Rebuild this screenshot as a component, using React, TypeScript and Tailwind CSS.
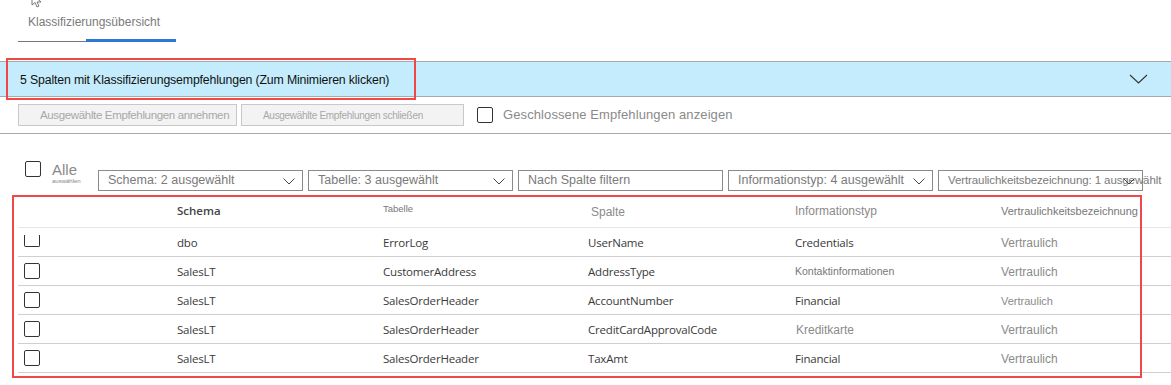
const sans = "font-['Liberation_Sans',Arial,sans-serif]";
const ui = "font-['Open_Sans','Noto_Sans',sans-serif]";

type Cell = {text: string; className: string};

const dark = `${ui} text-[11.5px] tracking-[-0.2px] text-[#3a3a3a]`;

const rows: Cell[][] = [
  [
    {text: "dbo", className: dark},
    {text: "ErrorLog", className: dark},
    {text: "UserName", className: dark},
    {text: "Credentials", className: dark},
    {text: "Vertraulich", className: `${sans} text-[12px] text-[#8a8a8a]`},
  ],
  [
    {text: "SalesLT", className: dark},
    {text: "CustomerAddress", className: dark},
    {text: "AddressType", className: dark},
    {text: "Kontaktinformationen", className: `${sans} text-[10.5px] text-[#777]`},
    {text: "Vertraulich", className: `${sans} text-[12px] text-[#8a8a8a]`},
  ],
  [
    {text: "SalesLT", className: dark},
    {text: "SalesOrderHeader", className: dark},
    {text: "AccountNumber", className: dark},
    {text: "Financial", className: dark},
    {text: "Vertraulich", className: `${sans} text-[11px] text-[#8a8a8a]`},
  ],
  [
    {text: "SalesLT", className: dark},
    {text: "SalesOrderHeader", className: dark},
    {text: "CreditCardApprovalCode", className: dark},
    {text: "Kreditkarte", className: `${sans} pl-px text-[12px] text-[#8a8a8a]`},
    {text: "Vertraulich", className: `${sans} text-[12px] text-[#8a8a8a]`},
  ],
  [
    {text: "SalesLT", className: dark},
    {text: "SalesOrderHeader", className: dark},
    {text: "TaxAmt", className: dark},
    {text: "Financial", className: dark},
    {text: "Vertraulich", className: `${sans} text-[12px] text-[#8a8a8a]`},
  ],
];

const cols = "grid grid-cols-[159px_206px_205px_207px_206px_1fr]";

const Chevron = ({className}: {className: string}) => (
  <svg className={className} width="12" height="7" viewBox="0 0 12 7">
    <path d="M0.5 0.5 L6 6 L11.5 0.5" fill="none" stroke="#444" strokeWidth="1" />
  </svg>
);

const Dropdown = ({
  label,
  textSize = "text-[12.5px]",
  chevron = true,
}: {
  label: string;
  textSize?: string;
  chevron?: boolean;
}) => (
  <div className="relative flex h-[21px] w-[205px] shrink-0 items-center border border-[#8a8a8a] bg-white pl-[9px]">
    <span className={`whitespace-nowrap text-[#7a7a7a] ${textSize}`}>{label}</span>
    {chevron && <Chevron className="absolute right-[7px] top-[7px]" />}
  </div>
);

export default function App() {
  return (
    <div className={`relative h-[385px] w-[1171px] overflow-hidden bg-white ${sans}`}>
      {/* mouse cursor, cut off at the top */}
      <svg
        className="absolute left-[31px] top-[-7px]"
        width="14"
        height="16"
        viewBox="0 0 14 16"
      >
        <path
          d="M1 1 L1 12 L4 9.5 L6 14 L8 13 L6 9 L10 9 Z"
          fill="white"
          stroke="#555"
          strokeWidth="0.8"
        />
      </svg>

      {/* tab */}
      <div className="pt-[15px]">
        <div className="pl-[28px] text-[12px] leading-[14px] text-[#7a7a7a]">
          Klassifizierungsübersicht
        </div>
        <div className="ml-[18px] mt-[10px] flex items-end">
          <div className="h-px w-[68px] bg-[#777]" />
          <div className="h-[3px] w-[90px] bg-[#2b79d4]" />
        </div>
      </div>

      {/* banner */}
      <div className="mt-[19px] flex h-[36px] items-center justify-between border-y border-[#a9a9a9] bg-[#c5ecfc] pl-[20px] pr-[23px]">
        <span className="pt-[3px] text-[12.3px] tracking-[-0.15px] text-[#111]">
          5 Spalten mit Klassifizierungsempfehlungen (Zum Minimieren klicken)
        </span>
        <svg width="19" height="10" viewBox="0 0 19 10">
          <path d="M1 1 L9.5 9 L18 1" fill="none" stroke="#333" strokeWidth="1.1" />
        </svg>
      </div>

      {/* actions */}
      <div className="mt-[7px] flex items-center pl-[18px]">
        <button className="flex h-[22px] w-[219px] items-center justify-start border border-[#c8c8c8] bg-[#f3f3f3] pl-[21px] pt-px text-[11.5px] tracking-[-0.35px] text-[#a8a8a8]">
          Ausgewählte Empfehlungen annehmen
        </button>
        <button className="ml-[4px] flex h-[22px] w-[223px] items-center justify-start border border-[#c8c8c8] bg-[#f3f3f3] pl-[21px] text-[10px] tracking-[-0.3px] text-[#a8a8a8]">
          Ausgewählte Empfehlungen schließen
        </button>
        <div className="ml-[13px] h-[16px] w-[16px] rounded-[2px] border border-[#333] bg-white" />
        <span className="ml-[10px] text-[13px] tracking-[0.1px] text-[#8a8a8a]">
          Geschlossene Empfehlungen anzeigen
        </span>
      </div>

      <div className="mt-[7px] h-px w-full bg-[#a9a9a9]" />

      {/* filters */}
      <div className="mt-[27px] flex items-start pl-[25px]">
        <div className="relative h-[30px] w-[73px] shrink-0">
          <div className="h-[16px] w-[16px] rounded-[2px] border border-[#333]" />
          <span className="absolute left-[27px] top-[1px] text-[15px] leading-[15px] text-[#8a8a8a]">
            Alle
          </span>
          <span className="absolute left-[27px] top-[17px] text-[6px] leading-[6px] text-[#888]">
            auswählen
          </span>
        </div>
        <div className="mt-[9px] flex gap-[5px]">
          <Dropdown label="Schema: 2 ausgewählt" />
          <Dropdown label="Tabelle: 3 ausgewählt" />
          <Dropdown label="Nach Spalte filtern" chevron={false} />
          <Dropdown label="Informationstyp: 4 ausgewählt" />
          <Dropdown label="Vertraulichkeitsbezeichnung: 1 ausgewählt" textSize="text-[11.5px] tracking-[-0.1px]" />
        </div>
      </div>

      {/* table */}
      <div className="ml-[18px] mt-[4px]">
        <div className={`${cols} h-[33px] items-center border-b border-[#e6e6e6]`}>
          <div />
          <div className={`${ui} text-[11.5px] font-semibold text-[#444]`}>Schema</div>
          <div className="-mt-[4px] text-[9.5px] text-[#777]">Tabelle</div>
          <div className="mt-[2px] pl-[3px] text-[12px] text-[#8a8a8a]">Spalte</div>
          <div className="text-[12px] text-[#8a8a8a]">Informationstyp</div>
          <div className="whitespace-nowrap text-[11px] text-[#777]">Vertraulichkeitsbezeichnung</div>
        </div>
        {rows.map((row, i) => (
          <div key={i} className={`${cols} h-[29px] items-center border-b border-[#cfcfcf] pt-[2px]`}>
            <div className="pl-[6px]">
              {i === 0 ? (
                <div className="mt-[-5px] h-[12px] w-[16px] rounded-b-[2px] border-x border-b border-[#333]" />
              ) : (
                <div className="-mt-[2px] h-[16px] w-[16px] rounded-[2px] border border-[#333]" />
              )}
            </div>
            {row.map((c, j) => (
              <div key={j} className={`whitespace-nowrap ${c.className}`}>
                {c.text}
              </div>
            ))}
          </div>
        ))}
      </div>

      {/* annotation boxes */}
      <div className="absolute left-[6px] top-[58px] h-[42px] w-[410px] border-2 border-[#f04848]" />
      <div className="absolute left-[12px] top-[195px] h-[183px] w-[1130px] border-2 border-[#f04848]" />
    </div>
  );
}
